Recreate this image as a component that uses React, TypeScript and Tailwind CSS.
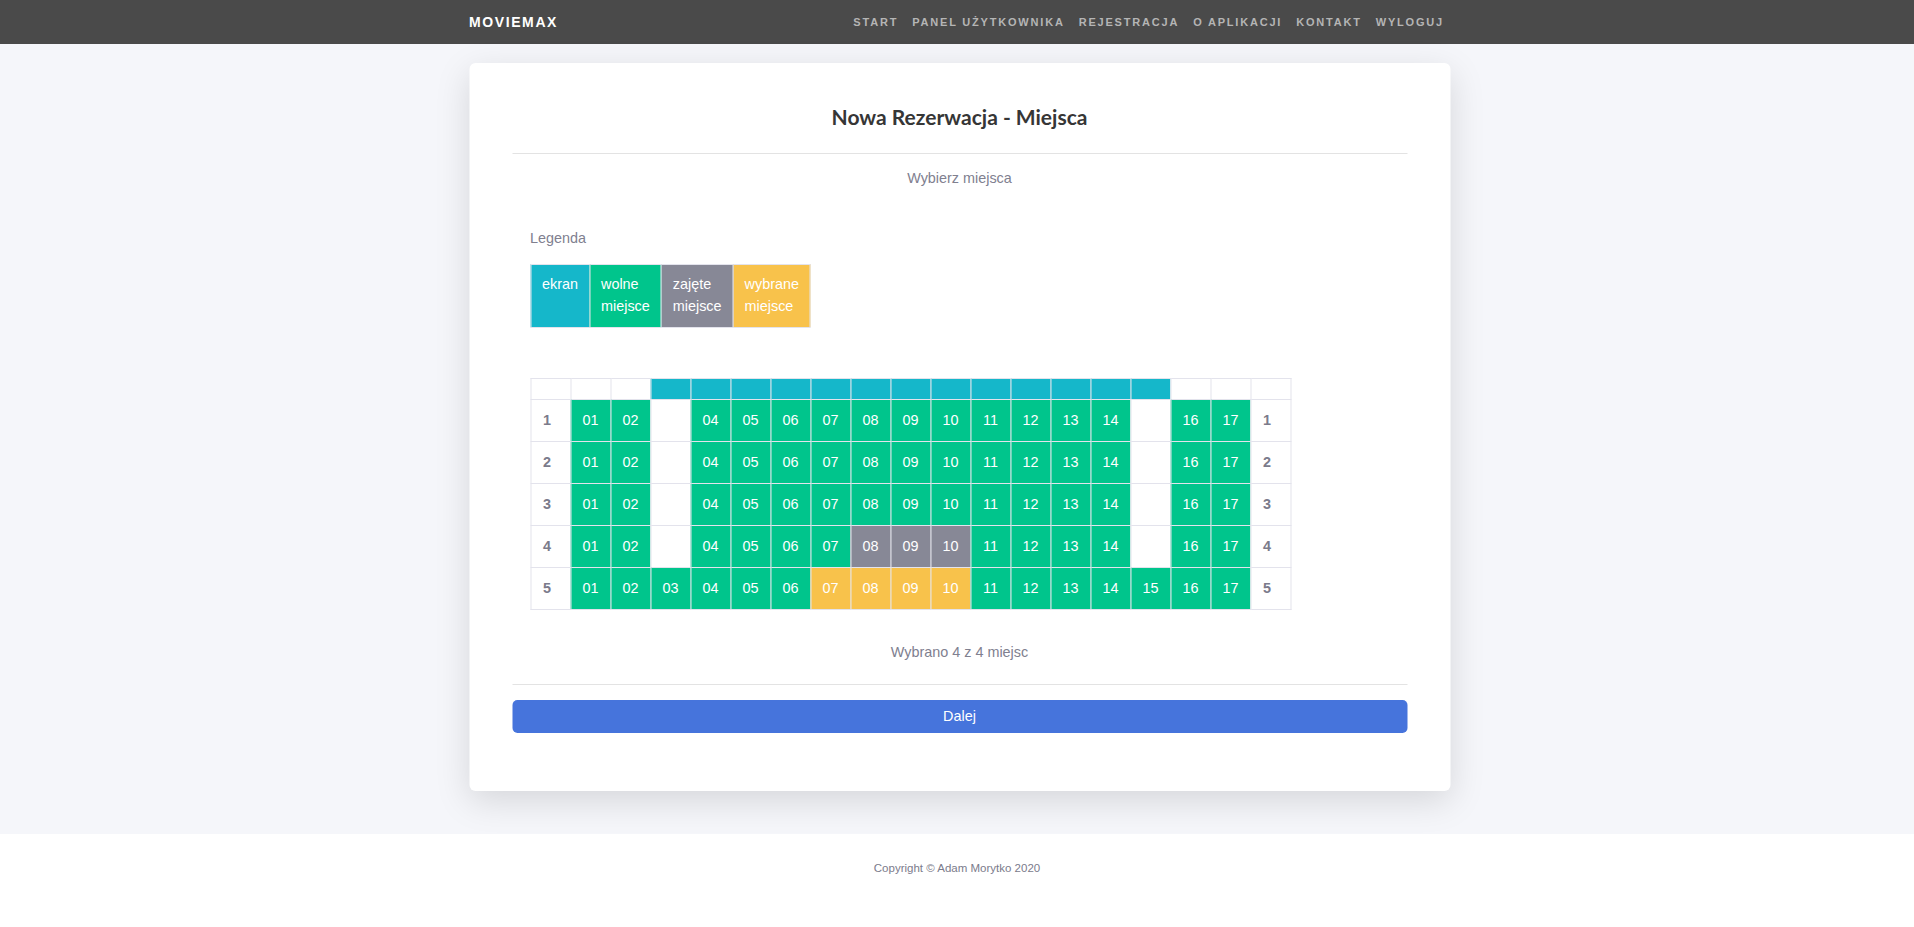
import React from "react";

const NAV = ["START", "PANEL UŻYTKOWNIKA", "REJESTRACJA", "O APLIKACJI", "KONTAKT", "WYLOGUJ"];

type SeatState = "empty" | "free" | "taken" | "selected";

function seatState(r: number, s: number): SeatState {
  if (r <= 4 && (s === 3 || s === 15)) return "empty";
  if (r === 4 && s >= 8 && s <= 10) return "taken";
  if (r === 5 && s >= 7 && s <= 10) return "selected";
  return "free";
}

const seatBg: Record<SeatState, string> = {
  empty: "bg-white",
  free: "bg-[#00c58c]",
  taken: "bg-[#878896]",
  selected: "bg-[#f8c24b]",
};

const seats = Array.from({ length: 17 }, (_, i) => i + 1);
const rows = [1, 2, 3, 4, 5];

export default function App() {
  return (
    <div className="min-h-[927px] bg-white font-['Liberation_Sans',Arial,sans-serif]">
      <nav className="h-[44px] bg-[#4a4a4a]">
        <div className="mx-auto flex h-full w-[981px] translate-x-[2.5px] items-center justify-between pr-[6px]">
          <span className="text-[14px] font-bold tracking-[1.6px] text-white">MOVIEMAX</span>
          <div className="flex items-center gap-[14px]">
            {NAV.map((n) => (
              <span key={n} className="text-[11px] font-bold tracking-[1.8px] text-[#b5b5b5]">
                {n}
              </span>
            ))}
          </div>
        </div>
      </nav>

      <main className="bg-[#f5f6fa] pb-[43px] pt-[19px]">
        <div className="mx-auto w-[981px] translate-x-[2.5px] rounded-md bg-white px-[43px] pb-[58px] pt-[40px] shadow-[0_10px_35px_rgba(0,0,0,0.13)]">
          <h1 className="text-center font-['Lato',sans-serif] text-[21px] font-bold leading-[27px] text-[#363636]">
            Nowa Rezerwacja - Miejsca
          </h1>
          <div className="mt-[23px] h-px bg-[#e3e3e3]" />
          <p className="mt-[13.5px] text-center text-[14.4px] leading-[21.6px] text-[#80808f]">Wybierz miejsca</p>

          <div className="px-[18px]">
            <p className="mt-[39px] text-[14.4px] leading-[21.6px] text-[#80808f]">Legenda</p>
            <table className="mt-[14px] border-collapse text-[14.4px] leading-[21.6px] text-white">
              <tbody>
                <tr>
                  <td className="border border-[#e3e3ec] bg-[#15b7ca] px-[11px] py-[9.5px] align-top">ekran</td>
                  <td className="border border-[#e3e3ec] bg-[#00c58c] px-[11px] py-[9.5px] align-top">
                    wolne
                    <br />
                    miejsce
                  </td>
                  <td className="border border-[#e3e3ec] bg-[#878896] px-[11px] py-[9.5px] align-top">
                    zajęte
                    <br />
                    miejsce
                  </td>
                  <td className="border border-[#e3e3ec] bg-[#f8c24b] px-[11px] py-[9.5px] align-top">
                    wybrane
                    <br />
                    miejsce
                  </td>
                </tr>
              </tbody>
            </table>

            <table className="mt-[50px] w-[760px] table-fixed border-collapse text-[14.4px] leading-[21.6px]">
              <tbody>
                <tr className="h-[21px]">
                  <td className="w-[40px] border border-[#e3e3ec] bg-white p-0" />
                  {seats.map((s) => (
                    <td
                      key={s}
                      className={`w-[40px] border border-[#e3e3ec] p-0 ${s >= 3 && s <= 15 ? "bg-[#15b7ca]" : "bg-white"}`}
                    />
                  ))}
                  <td className="w-[40px] border border-[#e3e3ec] bg-white p-0" />
                </tr>
                {rows.map((r) => (
                  <tr key={r} className="h-[42px]">
                    <td className="border border-[#e3e3ec] bg-white pl-3 font-bold text-[#7b7b8b]">{r}</td>
                    {seats.map((s) => {
                      const st = seatState(r, s);
                      return (
                        <td
                          key={s}
                          className={`border border-[#e3e3ec] p-0 text-center text-white ${seatBg[st]}`}
                        >
                          {st === "empty" ? "" : String(s).padStart(2, "0")}
                        </td>
                      );
                    })}
                    <td className="border border-[#e3e3ec] bg-white pl-3 font-bold text-[#7b7b8b]">{r}</td>
                  </tr>
                ))}
              </tbody>
            </table>
          </div>

          <p className="mt-[32px] text-center text-[14.4px] leading-[21.6px] text-[#80808f]">Wybrano 4 z 4 miejsc</p>
          <div className="mt-[21px] h-px bg-[#e3e3e3]" />
          <button className="mt-[15px] flex h-[33px] w-full items-center justify-center rounded-[5px] bg-[#4674dc] text-[14.4px] text-white">
            Dalej
          </button>
        </div>
      </main>

      <footer className="bg-white pt-[27px]">
        <p className="text-center text-[11.5px] leading-[14px] text-[#7b7b8b]">Copyright © Adam Morytko 2020</p>
      </footer>
    </div>
  );
}
